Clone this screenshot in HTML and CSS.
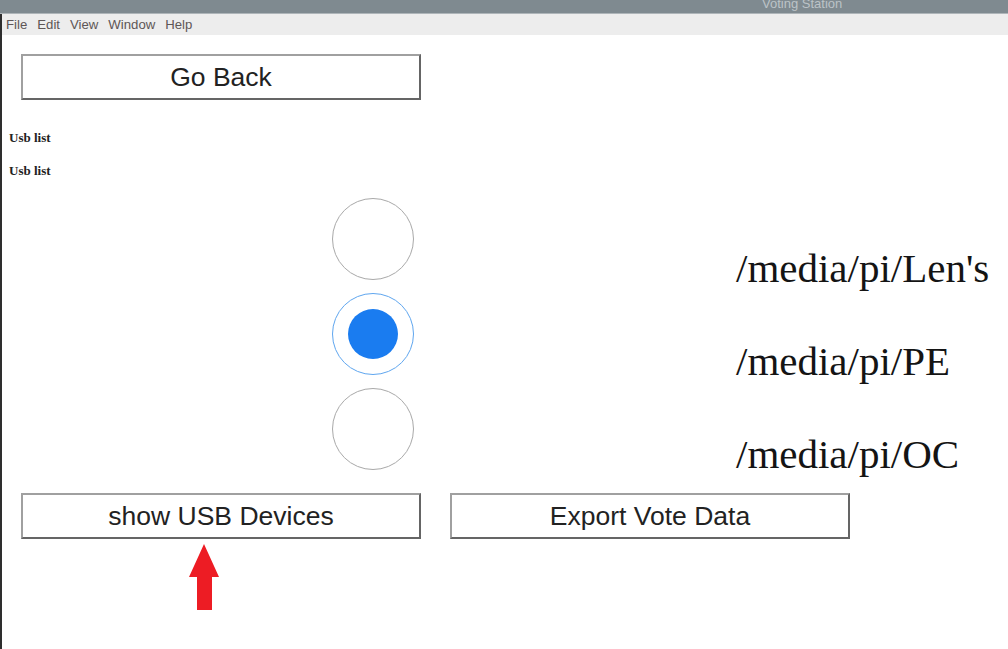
FILE: index.html
```html
<!DOCTYPE html>
<html>
<head>
<meta charset="utf-8">
<title>Voting Station</title>
<link rel="stylesheet" href="styles.css">
</head>
<body>
<div class="titlebar"><span class="title">Voting Station</span></div>
<div class="window">
  <div class="menubar">
    <span class="menu-item">File</span>
    <span class="menu-item">Edit</span>
    <span class="menu-item">View</span>
    <span class="menu-item">Window</span>
    <span class="menu-item">Help</span>
  </div>
  <div class="content">
    <div class="btn btn-back">Go Back</div>
    <div class="usb-labels">
      <div class="usb-label">Usb list</div>
      <div class="usb-label">Usb list</div>
    </div>
    <div class="devices">
      <div class="radios">
        <div class="radio"></div>
        <div class="radio selected"><div class="dot"></div></div>
        <div class="radio"></div>
      </div>
      <div class="paths">
        <div class="path">/media/pi/Len's</div>
        <div class="path">/media/pi/PE</div>
        <div class="path">/media/pi/OC</div>
      </div>
    </div>
    <div class="actions">
      <div class="btn">show USB Devices</div>
      <div class="btn">Export Vote Data</div>
    </div>
    <div class="arrow">
      <svg width="30" height="66" viewBox="0 0 30 66">
        <polygon points="15,0 30,33 23,33 23,66 8,66 8,33 0,33" fill="#ed1c24"/>
      </svg>
    </div>
  </div>
</div>
</body>
</html>
```
FILE: styles.css
```css
html, body {
  margin: 0;
  padding: 0;
  background: #ffffff;
}
body {
  width: 1008px;
  height: 649px;
  overflow: hidden;
}
.titlebar {
  height: 10px;
  padding-bottom: 3px;
  background: #7f8a90;
  border-bottom: 1px solid #aeb5b9;
  display: flex;
  align-items: flex-end;
  overflow: hidden;
  padding-left: 762px;
}
.title {
  font-family: "Liberation Sans", Arial, sans-serif;
  font-size: 13px;
  line-height: 13px;
  color: #bcc3c7;
  white-space: nowrap;
}
.window {
  border-left: 2px solid #2e2e2e;
  height: 635px;
}
.menubar {
  height: 21px;
  background: #ededed;
  display: flex;
  font-family: "Liberation Sans", Arial, sans-serif;
  font-size: 13.2px;
  line-height: 21px;
  color: #5e5656;
}
.menu-item {
  padding: 0 5px;
}
.menu-item:first-child {
  padding-left: 4px;
}
.content {
  display: flex;
  flex-direction: column;
  align-items: flex-start;
}
.btn {
  box-sizing: border-box;
  width: 400px;
  height: 46px;
  border: 2px solid;
  border-color: #a0a0a0 #656565 #656565 #a0a0a0;
  display: flex;
  align-items: center;
  justify-content: center;
  font-family: "Liberation Sans", Arial, sans-serif;
  font-size: 26.5px;
  color: #222222;
  background: #ffffff;
}
.btn-back {
  margin-top: 19px;
  margin-left: 19px;
}
.usb-labels {
  margin-top: 21px;
  padding-left: 7px;
}
.usb-label {
  font-family: "Liberation Serif", "Times New Roman", serif;
  font-weight: bold;
  font-size: 13px;
  line-height: 33px;
  color: #222222;
}
.devices {
  margin-top: 11px;
  height: 272px;
  display: flex;
  align-items: flex-start;
}
.radios {
  margin-left: 330px;
  display: flex;
  flex-direction: column;
  gap: 13px;
}
.radio {
  box-sizing: border-box;
  width: 82px;
  height: 82px;
  border-radius: 50%;
  border: 1px solid #a9a9a9;
  display: flex;
  align-items: center;
  justify-content: center;
}
.radio.selected {
  border-color: #5fa6ef;
}
.dot {
  width: 50px;
  height: 50px;
  border-radius: 50%;
  background: #1a7cf0;
}
.paths {
  margin-left: 322px;
  padding-top: 24px;
}
.path {
  font-family: "Liberation Serif", "Times New Roman", serif;
  font-size: 41px;
  line-height: 93px;
  color: #141414;
  white-space: nowrap;
}
.actions {
  margin-top: 23px;
  margin-left: 19px;
  display: flex;
  gap: 29px;
}
.arrow {
  margin-top: 5px;
  margin-left: 187px;
  line-height: 0;
}
```
